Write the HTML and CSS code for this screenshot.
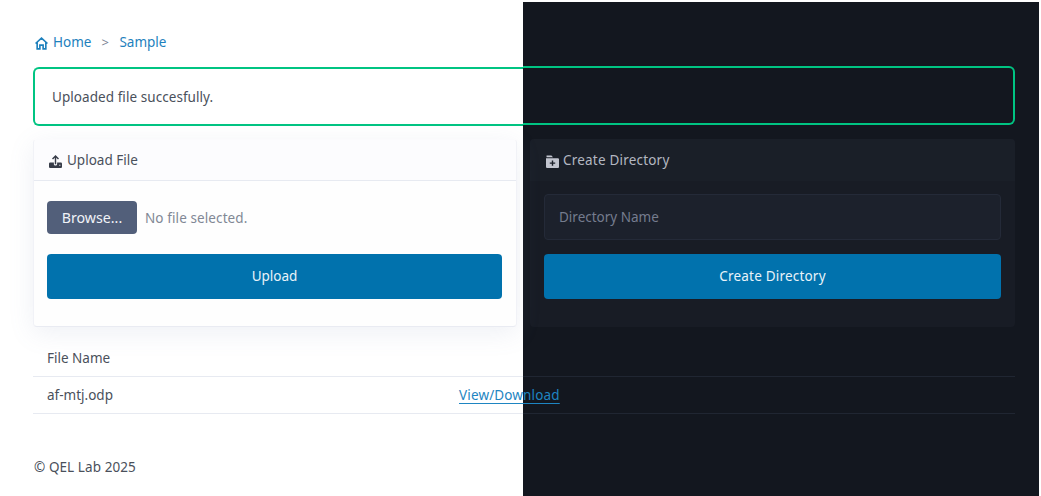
FILE: index.html
```html
<!DOCTYPE html>
<html lang="en">
<head>
<meta charset="utf-8">
<title>Sample</title>
<link rel="stylesheet" href="styles.css">
</head>
<body>
<main class="page">
  <section class="pane light">
    <nav class="crumbs">
      <svg class="home-icon" viewBox="0 0 24 24" fill="none" stroke="currentColor" stroke-width="3"><path d="M1 12 12 2l11 10M4 10v12h5v-7h6v7h5V10"/></svg>
      <a class="home">Home</a><span class="sep">&gt;</span><a class="sample">Sample</a>
    </nav>
    <div class="alert"><span class="message">Uploaded file succesfully.</span></div>
    <article class="card">
      <header class="card-head">
        <svg class="icon" viewBox="0 0 24 24"><path fill="none" stroke="currentColor" stroke-width="2.6" d="M12 17V2M6.500 7.500 12 2l5.500 5.500"/><path fill="currentColor" d="M2 14h7v3c0 3 6 3 6 0v-3h7q2 0 2 2v6q0 2-2 2H2q-2 0-2-2v-6q0-2 2-2zm17 4v2h2v-2z"/></svg>
        <span class="upload-title">Upload File</span>
      </header>
      <div class="card-body">
        <div class="file-row"><button class="browse"><span>Browse...</span></button><span class="no-file">No file selected.</span></div>
        <button class="button"><span class="upload-label">Upload</span></button>
      </div>
    </article>
    <div class="files">
      <div class="row"><span class="file-heading">File Name</span></div>
      <div class="row"><span class="file">af-mtj.odp</span><a class="download">View/Download</a></div>
    </div>
    <footer class="footer"><span>© QEL Lab 2025</span></footer>
  </section>
  <section class="pane dark">
    <div class="alert"></div>
    <article class="card">
      <header class="card-head">
        <svg class="icon" viewBox="0 0 24 24"><path fill="currentColor" fill-rule="evenodd" d="M1 1h9l3 3H1zM0 6h22q2 0 2 2v14q0 2-2 2H2q-2 0-2-2zm10.700 4v3.700H7v2.600h3.700V20h2.600v-3.700H17v-2.600h-3.700V10z"/></svg>
        <span class="create-title">Create Directory</span>
      </header>
      <div class="card-body">
        <div class="input"><span>Directory Name</span></div>
        <button class="button"><span class="create-label">Create Directory</span></button>
      </div>
    </article>
    <div class="files"><div class="row"></div><div class="row"></div></div>
  </section>
</main>
</body>
</html>
```
FILE: styles.css
```css
* { box-sizing: border-box; }
body {
  margin: 0;
  background: #fff;
  font: 13.5px/20px "Noto Sans", "Open Sans", sans-serif;
  color: #4a505b;
  overflow: hidden;
}
.page { display: grid; grid-template-columns: 523px 516px; height: 496px; }
.pane { display: flex; flex-direction: column; min-width: 0; white-space: nowrap; }
.light { position: relative; z-index: 1; padding: 32px 0 0 33px; }
.dark { margin-top: 2px; padding: 64px 24px 0 0; background: #13171f; color: #b3b7c1; }

.crumbs { display: flex; align-items: center; height: 20px; margin-bottom: 15px; padding-left: 2px; color: #1e81bd; }
.home-icon { width: 13px; height: 13px; margin: 3px 5px 0 0; }
.sep { width: 9px; margin: 0 9px 0 10px; color: #7b8495; font-size: 13px; }

.alert { flex: none; height: 59px; border: 2px solid #00c482; display: flex; align-items: center; }
.light .alert { border-right: 0; border-radius: 6px 0 0 6px; padding-left: 17px; }
.dark .alert { border-left: 0; border-radius: 0 6px 6px 0; }
.message { letter-spacing: .06px; }

.card { flex: none; height: 188px; border-radius: 4px; }
.light .card { width: 484px; margin-top: 13px; background: #fefefe; border: 1px solid #f1f2f7; border-top-color: #fbfbfd; border-bottom-color: #e9ebf2; box-shadow: 0 6px 26px rgba(112, 130, 175, .12); }
.dark .card { width: 485px; margin: 14px 0 0 7px; background: #181c25; }
.card-head { display: flex; align-items: center; height: 42px; border-radius: 4px 4px 0 0; }
.light .card-head { height: 41px; padding-left: 15px; background: #fcfcfe; border-bottom: 1px solid #e7eaf1; }
.dark .card-head { padding-left: 16px; background: #1a1f28; }
.icon { width: 13px; height: 13px; margin: 2px 5px 0 0; color: #373c48; }
.dark .icon { color: #c2c5cf; margin-right: 4px; }
.create-title, .create-label { letter-spacing: .2px; }
.card-body { padding: 19px 14px 0; }
.light .card-body { padding: 20px 14px 0 13px; }
.file-row { display: flex; align-items: center; height: 33px; margin-bottom: 20px; }
.browse { width: 90px; height: 33px; margin-right: 8px; padding: 0; border: 0; border-radius: 4px; background: #525f7a; color: #f0f2f7; font: inherit; font-size: 14.2px; }
.no-file { color: #818895; letter-spacing: .1px; }
.button { display: block; width: 100%; height: 45px; padding: 0 0 2px; border: 0; border-radius: 4px; background: #0172ad; color: #e9f3f9; font: inherit; }
.dark .card-body { padding-top: 13px; }
.input { display: flex; align-items: center; height: 46px; margin-bottom: 14px; padding-left: 14px; border: 1px solid #242a38; border-radius: 4px; background: #1c212c; color: #757c8e; }

.files { margin-top: 13px; }
.row { display: flex; align-items: center; height: 37px; border-bottom: 1px solid #e7eaf1; padding-left: 14px; }
.dark .row { border-color: #202632; }
.file { flex: none; width: 412px; }
.download { flex: none; color: #1e85c2; text-decoration: underline; text-underline-offset: 3px; letter-spacing: .15px; }
.footer { margin-top: 43px; padding-left: 1px; letter-spacing: .08px; }
```
